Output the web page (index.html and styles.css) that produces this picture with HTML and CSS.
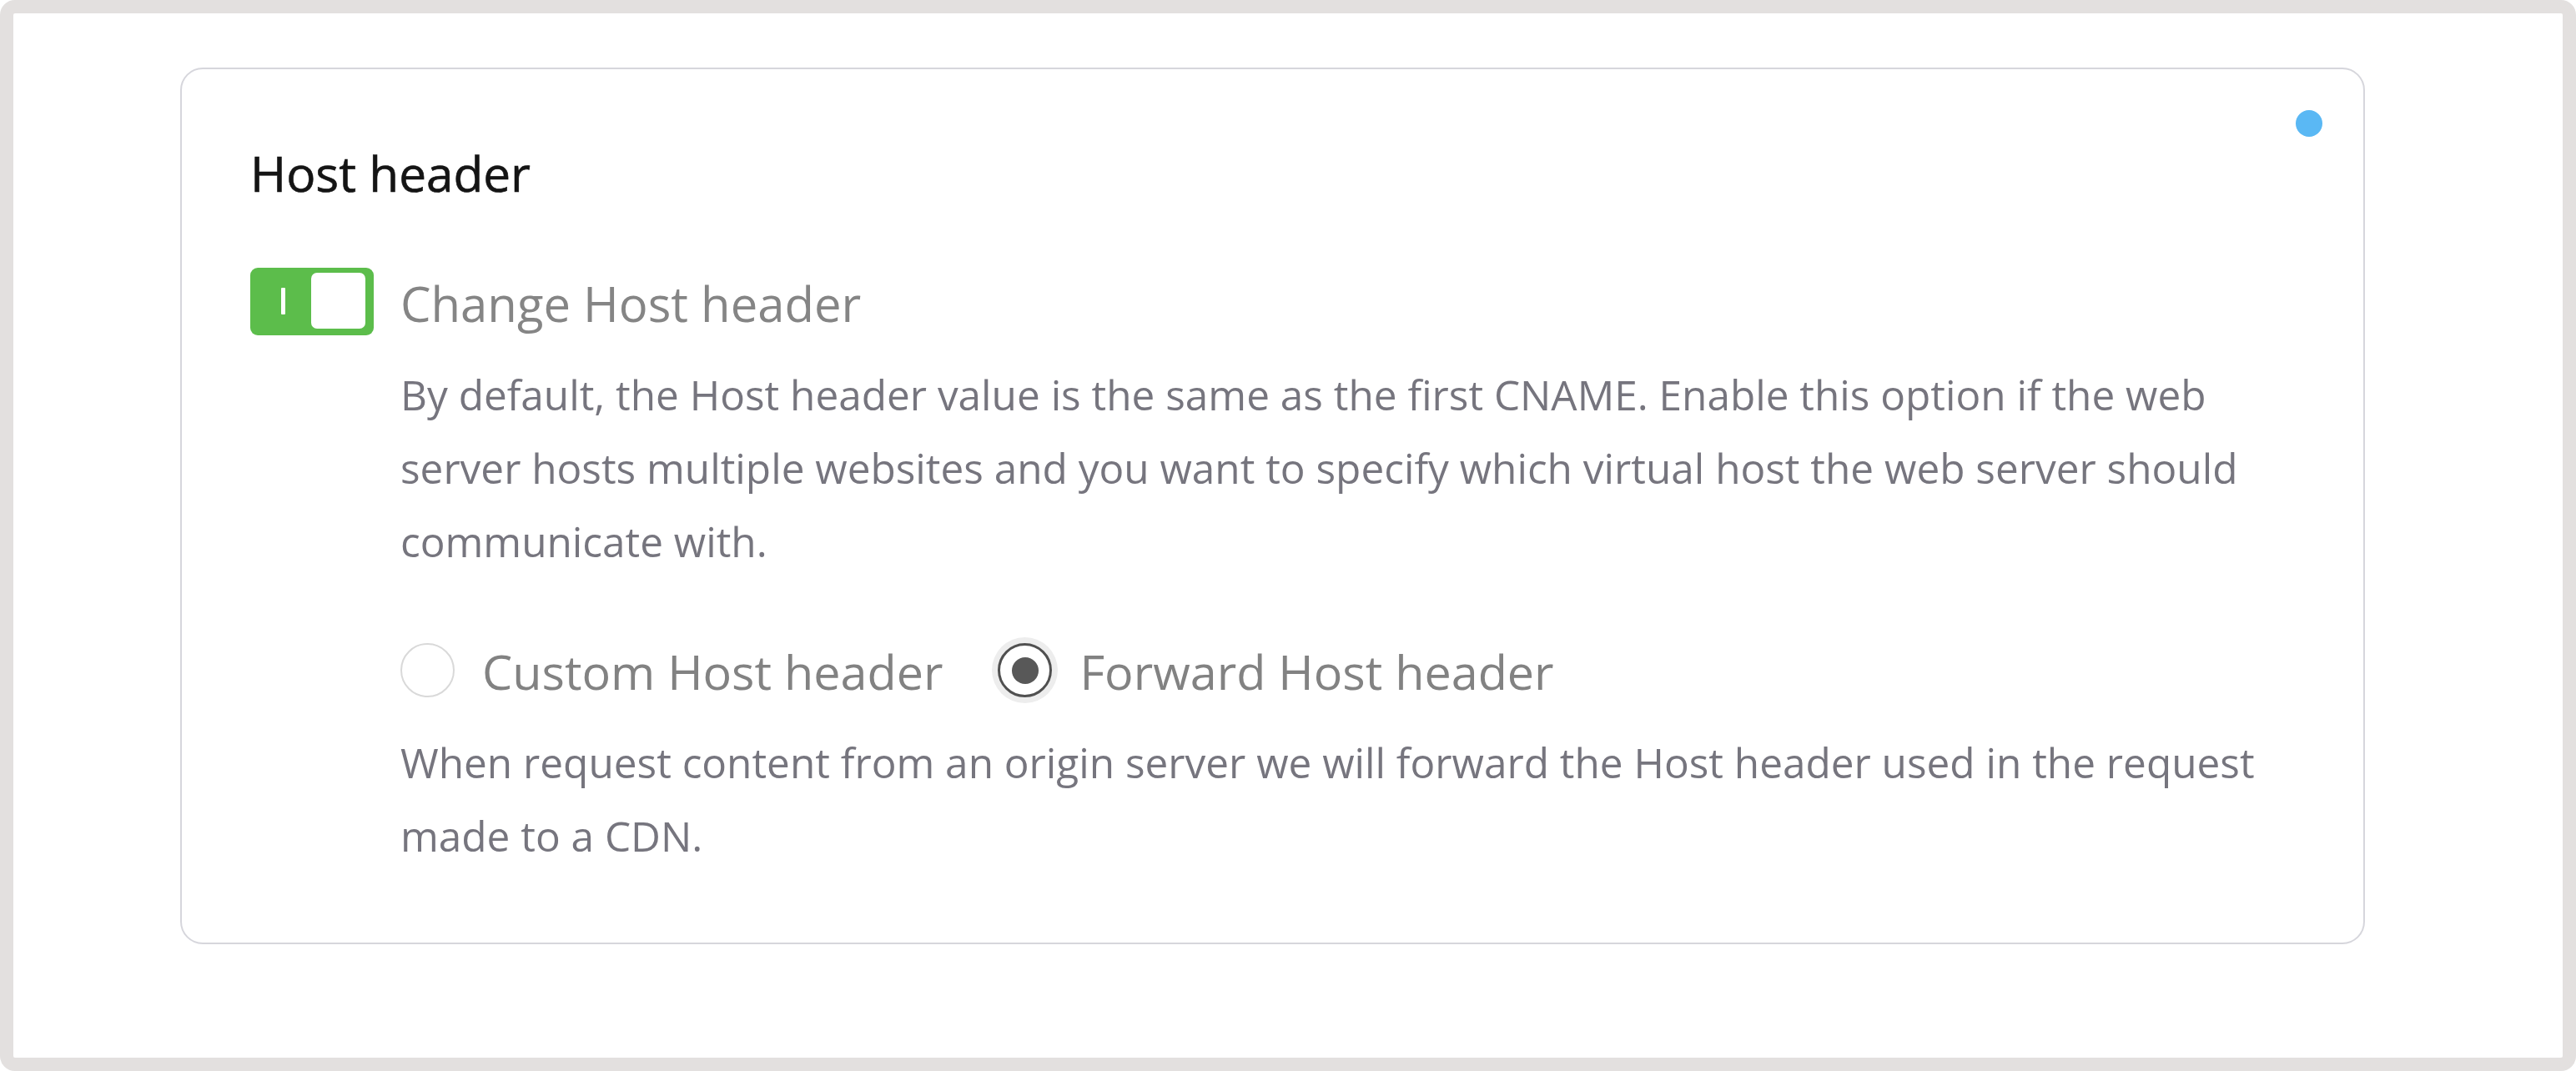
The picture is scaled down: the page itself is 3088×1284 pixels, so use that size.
FILE: index.html
```html
<!DOCTYPE html>
<html lang="en">
<head>
<meta charset="utf-8">
<title>Host header</title>
<link rel="stylesheet" href="styles.css">
</head>
<body>
<div class="frame">
  <section class="card">
    <span class="status-dot"></span>
    <h2 class="card-title">Host header</h2>
    <div class="switch-row">
      <span class="switch" role="switch" aria-checked="true">
        <span class="switch-mark"><span class="switch-bar"></span></span>
        <span class="switch-knob"></span>
      </span>
      <span class="switch-label">Change Host header</span>
    </div>
    <div class="option-body">
      <p class="help help-first">By default, the Host header value is the same as the first CNAME. Enable this option if the web server hosts multiple websites and you want to specify which virtual host the web server should communicate with.</p>
      <div class="radio-group">
        <label class="radio-option">
          <span class="radio"></span>
          <span class="radio-label">Custom Host header</span>
        </label>
        <label class="radio-option">
          <span class="radio radio-checked"><span class="radio-dot"></span></span>
          <span class="radio-label">Forward Host header</span>
        </label>
      </div>
      <p class="help help-second">When request content from an origin server we will forward the Host header used in the request made to a CDN.</p>
    </div>
  </section>
</div>
</body>
</html>
```

FILE: styles.css
```css
html, body {
  margin: 0;
  padding: 0;
  background: #ffffff;
}

body {
  font-family: "Open Sans", "Noto Sans", "Liberation Sans", sans-serif;
}

.frame {
  box-sizing: border-box;
  width: 100vw;
  height: 100vh;
  border: 16px solid #e3e0df;
  border-radius: 18px;
  background: #ffffff;
  overflow: hidden;
}

.card {
  position: relative;
  box-sizing: border-box;
  width: 2619px;
  margin: 65px 0 0 200px;
  padding: 86px 82px 84px 82px;
  border: 2px solid #d6d6dc;
  border-radius: 27px;
  background: #ffffff;
}

.status-dot {
  position: absolute;
  top: 49px;
  right: 49px;
  width: 32px;
  height: 32px;
  border-radius: 50%;
  background: #5ab8f4;
}

.card-title {
  margin: 0;
  font-size: 58.5px;
  line-height: 76px;
  font-weight: 500;
  color: #141414;
  -webkit-text-stroke: 0.6px #141414;
}

.switch-row {
  display: flex;
  align-items: center;
  gap: 32px;
  margin-top: 76px;
}

.switch {
  box-sizing: border-box;
  display: flex;
  align-items: stretch;
  width: 148px;
  height: 81px;
  padding: 6px 10px 8px 0;
  border-radius: 9px;
  background: #5cbd4b;
}

.switch-mark {
  flex: 1;
  display: flex;
  align-items: center;
  justify-content: center;
  padding-left: 6px;
}

.switch-bar {
  width: 5px;
  height: 32px;
  background: #ffffff;
  border-radius: 1px;
}

.switch-knob {
  width: 65px;
  border-radius: 7px;
  background: #ffffff;
}

.switch-label {
  padding-top: 5px;
  font-size: 58px;
  line-height: 76px;
  color: #858585;
}

.option-body {
  padding-left: 180px;
}

.help {
  margin: 0;
  font-size: 49.5px;
  line-height: 88px;
  color: #76757e;
}

.help-first {
  margin-top: 27px;
}

.radio-group {
  display: flex;
  align-items: center;
  gap: 66px;
  margin-top: 70px;
  height: 81px;
}

.radio-option {
  display: flex;
  align-items: center;
  gap: 33px;
}

.radio {
  box-sizing: border-box;
  display: flex;
  align-items: center;
  justify-content: center;
  width: 65px;
  height: 65px;
  border: 2px solid #d9d9d9;
  border-radius: 50%;
  background: #ffffff;
}

.radio-checked {
  border: 3px solid #505050;
  box-shadow: 0 0 0 7px #ededed;
}

.radio-dot {
  width: 32px;
  height: 32px;
  border-radius: 50%;
  background: #585858;
}

.radio-label {
  padding-top: 3px;
  font-size: 57.5px;
  line-height: 78px;
  color: #828282;
}

.help-second {
  margin-top: 26px;
}
```
